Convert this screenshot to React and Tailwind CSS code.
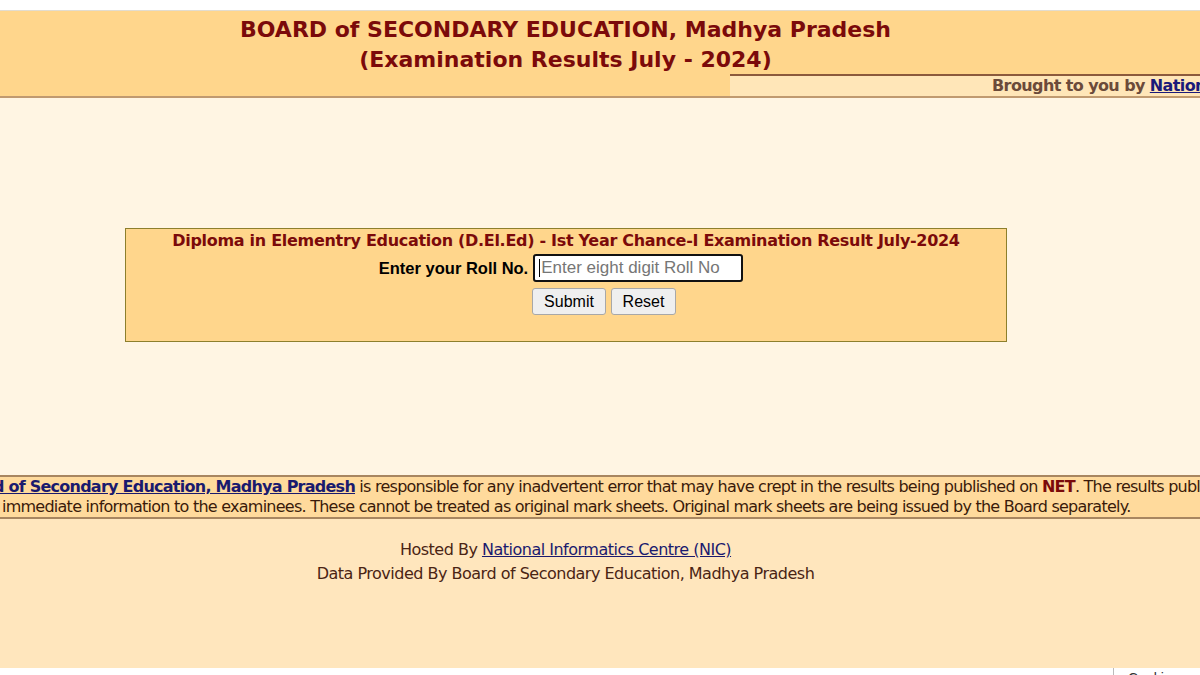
export default function App() {
  return (
    <div className="w-[1200px] h-[675px] overflow-hidden bg-[#fff5e3] font-['DejaVu_Sans',sans-serif] flex flex-col">
      {/* top strip */}
      <div className="h-[11px] shrink-0 bg-white border-b border-[#e2dccf]" />

      {/* header */}
      <header className="shrink-0 bg-[#ffd68c] border-b-2 border-[#c09a70]">
        <div className="w-[1131px] h-[63px] pt-[4px] text-center text-[22px] leading-[30px] font-bold text-[#7b0a0a]">
          <div>BOARD of SECONDARY EDUCATION, Madhya Pradesh</div>
          <div>(Examination Results July - 2024)</div>
        </div>
        <div className="flex h-[22px]">
          <div className="w-[730px]" />
          <div className="flex-1 border-t-2 border-[#8c5a3c] bg-[#ffe6b8] overflow-hidden">
            <div className="pl-[262px] whitespace-nowrap text-[16px] leading-[20px] font-bold text-[#6b4a3a] tracking-[-0.6px]">
              Brought to you by <span className="text-[#1a1a7a] underline">National Informatics Centre</span>
            </div>
          </div>
        </div>
      </header>

      {/* main */}
      <main className="shrink-0 h-[377px] pt-[130px]">
        <div className="ml-[125px] w-[882px] h-[114px] border border-[#8d7f2c] bg-[#ffd68c] flex flex-col items-center">
          <div className="mt-[1px] text-[16px] leading-[22px] font-bold text-[#7b0a0a] tracking-[-0.3px]">
            Diploma in Elementry Education (D.El.Ed) - Ist Year Chance-I Examination Result July-2024
          </div>
          <div className="flex items-center gap-[5px] mr-[10px] mt-[2px] font-['Liberation_Sans',sans-serif]">
            <span className="text-[16.5px] font-bold text-black">Enter your Roll No.</span>
            <div className="w-[210px] h-[28px] border-2 border-[#111] rounded-[3px] bg-white flex items-center pl-[4px] text-[17px] text-[#767676]">
              <span className="w-[1px] h-[18px] bg-black mr-[1px]" />
              Enter eight digit Roll No
            </div>
          </div>
          <div className="flex gap-[5px] ml-[76px] mt-[6px] font-['Liberation_Sans',sans-serif]">
            <button className="w-[74px] h-[27px] bg-[#efefef] border border-[#a8a8a8] rounded-[3px] text-[16px] text-black">Submit</button>
            <button className="w-[65px] h-[27px] bg-[#efefef] border border-[#a8a8a8] rounded-[3px] text-[16px] text-black">Reset</button>
          </div>
        </div>
      </main>

      {/* disclaimer */}
      <div className="shrink-0 h-[44px] border-y-2 border-[#a88660] bg-[#ffda9c] text-[16px] leading-[20px] text-[#3a1a0a] tracking-[-0.75px] whitespace-nowrap overflow-hidden">
        <div className="ml-[-46px]">
          <span className="font-bold text-[#1a1a6e] underline">Board of Secondary Education, Madhya Pradesh</span> is responsible for any inadvertent error that may have crept in the results being published on <b className="text-[#7b0a0a]">NET</b>. The results published on net are for
        </div>
        <div className="ml-[2px]">
          immediate information to the examinees. These cannot be treated as original mark sheets. Original mark sheets are being issued by the Board separately.
        </div>
      </div>

      {/* footer */}
      <footer className="shrink-0 h-[149px] bg-[#ffe6bd] pt-[19px] text-center text-[16px] leading-[24px] text-[#4a2414] tracking-[-0.5px]">
        <div className="w-[1131px]">
          Hosted By <span className="text-[#1a1a6e] underline">National Informatics Centre (NIC)</span>
        </div>
        <div className="w-[1131px]">Data Provided By Board of Secondary Education, Madhya Pradesh</div>
      </footer>

      <div className="flex-1 bg-white flex overflow-hidden">
        <div className="ml-[1113px] border-l border-[#bbb] pl-[14px] pt-[3px] text-[14px] leading-[14px] text-[#333] font-['Liberation_Sans',sans-serif]">
          Cookies
        </div>
      </div>
    </div>
  );
}
